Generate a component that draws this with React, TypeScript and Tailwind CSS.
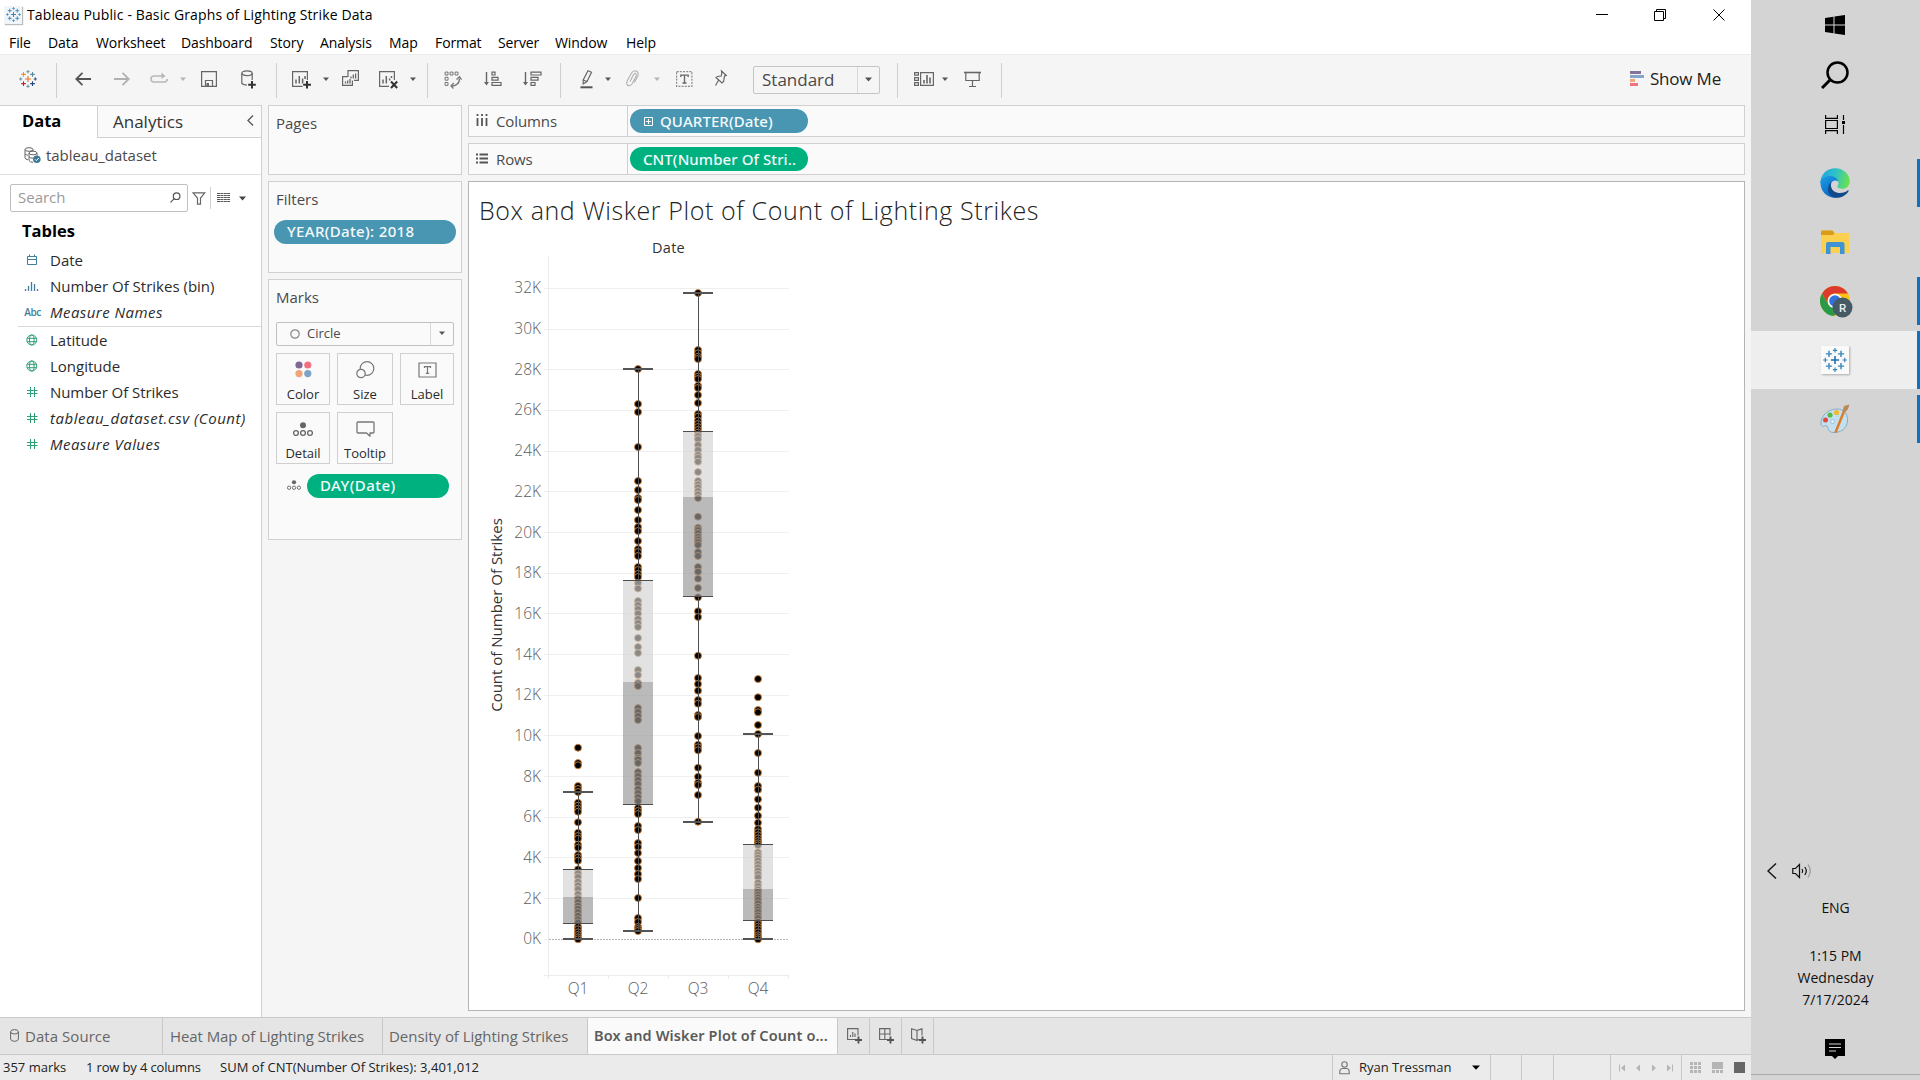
import React from 'react';

const UI = "font-['Open_Sans','Noto_Sans',sans-serif]";

/* ---------- shared bits ---------- */

function Caret({ className = '', light = false }: { className?: string; light?: boolean }) {
  return (
    <svg width="6" height="5" viewBox="0 0 6 5" className={'shrink-0 ' + className}>
      <path d="M0 0.5H6L3 4Z" fill={light ? '#b5b5b5' : '#555'} />
    </svg>
  );
}

function Sep({ className }: { className: string }) {
  return <div className={'mt-[2px] h-[35px] w-px shrink-0 bg-[#cfcfcf] ' + className} />;
}

function Ic({ w, h = 20, className = '', color = '#666', children }: { w: number; h?: number; className?: string; color?: string; children: React.ReactNode }) {
  return (
    <svg width={w} height={h} viewBox={`0 0 ${w} ${h}`} fill="none" stroke={color} strokeWidth="1.2" className={'shrink-0 ' + className}>
      {children}
    </svg>
  );
}

function Plus({ x, y, r, w, c }: { x: number; y: number; r: number; w: number; c: string }) {
  return <path d={`M${x - r} ${y}H${x + r}M${x} ${y - r}V${y + r}`} stroke={c} strokeWidth={w} />;
}

function TableauMark({ size, colors }: { size: number; colors: string[] }) {
  const [a, b, c, d, e] = colors;
  return (
    <svg width={size} height={size} viewBox="0 0 20 20" fill="none" className="shrink-0">
      <Plus x={10} y={10} r={3.4} w={1.3} c={a} />
      <Plus x={5} y={4.9} r={2.6} w={1.2} c={b} />
      <Plus x={15} y={4.9} r={2.6} w={1.2} c={c} />
      <Plus x={5} y={15.1} r={2.6} w={1.2} c={d} />
      <Plus x={15} y={15.1} r={2.6} w={1.2} c={e} />
      <Plus x={10} y={1.9} r={1.8} w={1} c={c} />
      <Plus x={10} y={18.1} r={1.8} w={1} c={c} />
      <Plus x={1.9} y={10} r={1.8} w={1} c={c} />
      <Plus x={18.1} y={10} r={1.8} w={1} c={e} />
    </svg>
  );
}

const BLUES = ['#3a7fae', '#3a86b5', '#3a86b5', '#3a86b5', '#3a86b5'];

/* ---------- title and menu ---------- */

const menus: [string, string][] = [
  ['File', 'w-[39px]'],
  ['Data', 'w-[48px]'],
  ['Worksheet', 'w-[85px]'],
  ['Dashboard', 'w-[89px]'],
  ['Story', 'w-[50px]'],
  ['Analysis', 'w-[69px]'],
  ['Map', 'w-[46px]'],
  ['Format', 'w-[63px]'],
  ['Server', 'w-[57px]'],
  ['Window', 'w-[71px]'],
  ['Help', 'w-[40px]'],
];

function TitleBar() {
  return (
    <div className="flex h-[29px] items-center bg-white pl-1 pr-[26px] text-black">
      <div className="flex h-[18px] w-[18px] items-center justify-center bg-[#f1f5f9] shadow-[1px_1px_1px_#bbb]">
        <TableauMark size={15} colors={BLUES} />
      </div>
      <div className="ml-[5px] text-[14px] tracking-[0.13px]">Tableau Public - Basic Graphs of Lighting Strike Data</div>
      <div className="ml-auto flex items-center">
        <Ic w={12} h={12} color="#000" className="mr-[46px]">
          <path d="M0 5.5H12" strokeWidth="1" />
        </Ic>
        <Ic w={12} h={12} color="#000" className="mr-[47px]">
          <path d="M0.5 2.5H9.5V11.5H0.5ZM2.5 2.5V0.5H11.5V9.5H9.5" strokeWidth="1" />
        </Ic>
        <Ic w={12} h={12} color="#000">
          <path d="M0.5 0.5L11.5 11.5M11.5 0.5L0.5 11.5" strokeWidth="1" />
        </Ic>
      </div>
    </div>
  );
}

function MenuBar() {
  return (
    <div className="flex h-[25px] items-center bg-white pl-[9px] pt-[2px] text-[14px] tracking-[-0.1px] text-black">
      {menus.map(([m, w]) => (
        <div key={m} className={'shrink-0 whitespace-nowrap ' + w}>{m}</div>
      ))}
    </div>
  );
}

/* ---------- toolbar ---------- */

function Toolbar() {
  return (
    <div className="flex h-[51px] shrink-0 items-center border-t border-[#ebebeb] bg-[#f5f5f5] pb-[2px] pr-[30px]">
      <div className="ml-[19px] flex">
        <TableauMark size={18} colors={['#e8762d', '#eb9129', '#5b879b', '#c72035', '#1f457e']} />
      </div>
      <Sep className="ml-[19px]" />
      <Ic w={16} className="ml-[18px]" color="#555"><path d="M16 10H1.5M7.5 3.8L1.2 10L7.5 16.2" strokeWidth="1.8" /></Ic>
      <Ic w={16} className="ml-[23px]" color="#b0b0b0"><path d="M0 10H14.5M8.5 3.8L14.8 10L8.5 16.2" strokeWidth="1.8" /></Ic>
      <Ic w={18} className="ml-5" color="#b8b8b8">
        <path d="M13 7H4Q1 7 1 10Q1 13 4 13H14Q17.3 13 17.3 10" strokeWidth="1.5" /><path d="M11.5 3.5L15.5 7L11.5 10Z" fill="#b8b8b8" stroke="none" />
      </Ic>
      <Caret className="ml-3" light />
      <Ic w={16} className="ml-[15px]"><path d="M0.6 2.6H15.4V17.4H0.6ZM4.5 17V11.5H11.5V17" /><path d="M5.5 14H8V17.5H5.5Z" fill="#666" stroke="none" /></Ic>
      <Ic w={15} className="ml-6">
        <path d="M0.8 4.2V14.2Q2 16 6 16M11.2 4.2V11" /><ellipse cx="6" cy="4.2" rx="5.2" ry="2.4" />
        <path d="M11 12V19.5M7.2 15.7H14.8" stroke="#333" strokeWidth="2" />
      </Ic>
      <Sep className="ml-5" />
      <Ic w={19} className="ml-[15px]">
        <path d="M10.5 17.4H0.6V2.6H15.4V11" /><path d="M4 14.5V10.5M7.3 14.5V7M10.6 14.5V9.5M13 10V7" strokeWidth="1.5" />
        <path d="M15 12V19.5M11.2 15.7H19" stroke="#333" strokeWidth="2" />
      </Ic>
      <Caret className="ml-3" />
      <Ic w={17} className="ml-[13px]">
        <path d="M6 8V1.6H16.4V11.4H12M5.5 7.6H0.6V16.4H10.4V11.6" /><path d="M9 9.5V7.5M11.3 9.5V5.5M13.6 9.5V4.5M3.5 14.5V12.5M5.7 14.5V11.5M8 14.5V10" strokeWidth="1.3" />
      </Ic>
      <Ic w={19} className="ml-5">
        <path d="M10 17.4H0.6V2.6H15.4V11" /><path d="M4 14.5V10.5M7.3 14.5V7M10.6 11.5V9.5M12.5 9V7" strokeWidth="1.5" />
        <path d="M12 12.5L18.2 19M18.2 12.5L12 19" stroke="#333" strokeWidth="2" />
      </Ic>
      <Caret className="ml-3" />
      <Sep className="ml-[11px]" />
      <Ic w={18} className="ml-4" color="#777">
        <path d="M1.1 3.1H4V6H1.1ZM6.1 3.1H9V6H6.1ZM11.1 3.1H14V6H11.1ZM1.1 8.3H4V11.2H1.1ZM1.1 13.5H4V16.4H1.1Z" strokeWidth="1" />
        <path d="M15.5 9.5Q15.5 16.5 8 17" strokeWidth="1.4" /><path d="M12.5 10.5L15.5 7.8L17.6 10.7M9.8 14L7 17L9.5 19.5" strokeWidth="1.3" />
      </Ic>
      <Ic w={18} className="ml-[22px]">
        <path d="M2.5 3V15" strokeWidth="1.4" /><path d="M0 13L2.5 16.5L5 13Z" fill="#666" stroke="none" />
        <path d="M8 3.1H11V6H8ZM8 8.3H14V11.2H8ZM8 13.5H17V16.4H8Z" />
      </Ic>
      <Ic w={19} className="ml-[21px]">
        <path d="M2.5 3V15" strokeWidth="1.4" /><path d="M0 13L2.5 16.5L5 13Z" fill="#666" stroke="none" />
        <path d="M8 3.1H18V6H8ZM8 8.3H15V11.2H8ZM8 13.5H12V16.4H8Z" />
      </Ic>
      <Sep className="ml-[18px]" />
      <Ic w={13} className="ml-[19px]">
        <path d="M8 1.8L11.5 3.3L7 12.5L3.2 15L3.2 11Z" /><path d="M3.2 11L7 12.5" /><path d="M0.5 18.3H12.5" strokeWidth="2" stroke="#555" />
      </Ic>
      <Caret className="ml-3" />
      <Ic w={13} className="ml-[15px]" color="#b0b0b0">
        <path d="M4 12.5L7.6 5.6Q9 3.6 10 5Q10.8 6 9.5 8.6L6 15Q3.6 18 1.4 16Q0 14.5 1.4 11.6L5.5 4Q8 0.6 10.8 2.3Q13 4 11.8 7L8.3 13.5" strokeWidth="1.1" />
      </Ic>
      <Caret className="ml-[15px]" light />
      <Ic w={17} className="ml-4">
        <path d="M0.6 2.6H15.9V17.4H0.6Z" strokeDasharray="2 1.2" stroke="#8a8a8a" /><path d="M4.8 8V6.2H12.2V8M8.5 6.2V14M6.5 14H10.5" strokeWidth="1.3" />
      </Ic>
      <Ic w={12} className="ml-[22px]">
        <path d="M6.5 2L11.3 6.5L9.5 7L8.6 12.5L7 14L1 8.5L2.5 7.5L6.2 7L6.8 4ZM3.7 11L0.5 16.5" />
      </Ic>
      <div className="ml-[26px] mt-px flex h-[28px] w-[127px] items-center rounded-[2px] border border-[#c4c4c4] text-[17px] text-[#4a4a4a]">
        <div className="w-[103px] pl-[8px]">Standard</div>
        <div className="flex h-full flex-1 items-center justify-center border-l border-[#d8d8d8]"><svg width="7" height="5"><path d="M0 0.5H7L3.5 4.5Z" fill="#555" /></svg></div>
      </div>
      <Sep className="ml-[17px]" />
      <Ic w={20} className="ml-4">
        <path d="M0.6 3.6H4.4V6.2H0.6ZM0.6 8.6H4.4V11.4H0.6ZM0.6 13.6H4.4V16.4H0.6ZM6.6 3.6H19.4V16.4H6.6Z" />
        <path d="M10 14.5V11M13 14.5V6M16 14.5V8.5" strokeWidth="1.6" />
      </Ic>
      <Caret className="ml-2" />
      <Ic w={17} className="ml-4">
        <path d="M0 3.5H17" strokeWidth="1.6" /><path d="M1.8 4V11.5H15.2V4M8.5 11.5V17.5M5 17.5H12" />
      </Ic>
      <Sep className="ml-5" />
      <svg width="14" height="16" className="ml-auto shrink-0">
        <path d="M0 0H11V3H0Z" fill="#86739b" /><path d="M0 4H14V7H0Z" fill="#84a6c8" /><path d="M0 8H5V11H0Z" fill="#f0a878" /><path d="M0 12H8V15H0Z" fill="#ef7280" />
      </svg>
      <div className="ml-[6px] text-[17px] tracking-[-0.2px] text-[#222]">Show Me</div>
    </div>
  );
}

/* ---------- data pane ---------- */

const BLUE = '#3f7f9b';
const GREEN = '#2f9f74';

function FieldIcon({ kind }: { kind: string }) {
  if (kind === 'abc') return <span className="w-[17px] text-center text-[10px] font-semibold tracking-[-0.4px] text-[#3f7f9b]">Abc</span>;
  return (
    <svg width="17" height="16" viewBox="0 0 17 16" fill="none" stroke={kind === 'date' || kind === 'bin' ? BLUE : GREEN} className="shrink-0">
      {kind === 'date' && <path d="M3.5 4.5H12.5V12.5H3.5ZM3.5 7.5H12.5M5.5 2.5V5M10.5 2.5V5" />}
      {kind === 'bin' && <path d="M1.5 11V13M4.500 8V13M7.500 4V13M10.500 6V13M13.500 11V13" strokeWidth="1.3" />}
      {kind === 'geo' && <><circle cx="7.8" cy="8" r="5" /><ellipse cx="7.8" cy="8" rx="2.3" ry="5" /><path d="M3.3 6.3H12.3M3.3 9.7H12.3" /></>}
      {kind === 'num' && <path d="M6.5 3V13M10.5 3V13M3 6.5H13.5M3 9.5H13.5" />}
    </svg>
  );
}

const fields: [string, string, string][] = [
  ['date', 'Date', ''],
  ['bin', 'Number Of Strikes (bin)', ''],
  ['abc', 'Measure Names', 'italic tracking-[0.45px]'],
];
const measures: [string, string, string][] = [
  ['geo', 'Latitude', ''],
  ['geo', 'Longitude', ''],
  ['num', 'Number Of Strikes', 'tracking-[-0.06px]'],
  ['num', 'tableau_dataset.csv (Count)', 'italic tracking-[0.52px]'],
  ['num', 'Measure Values', 'italic tracking-[0.45px]'],
];

function Field({ f }: { f: [string, string, string] }) {
  return (
    <div className="flex h-[26px] items-center pl-[24px] text-[15px] text-[#2b2b2b]">
      <FieldIcon kind={f[0]} />
      <span className={'ml-[9px] whitespace-nowrap ' + f[2]}>{f[1]}</span>
    </div>
  );
}

function DataPane() {
  return (
    <div className="flex w-[262px] shrink-0 flex-col border-r border-t border-[#d0d0d0] bg-white">
      <div className="flex h-[32px] shrink-0">
        <div className="w-[97px] pl-[22px] pt-[3px] text-[16.5px] leading-[24px] font-bold text-black">Data</div>
        <div className="flex flex-1 items-center justify-between border-b border-l border-[#d0d0d0] bg-[#fafafa] pl-[15px] pr-[7px] text-[17px] text-[#333]">
          <span>Analytics</span>
          <svg width="7" height="11" fill="none" className="mb-[2px]"><path d="M6 0.5L1 5.5L6 10.5" stroke="#555" strokeWidth="1.3" /></svg>
        </div>
      </div>
      <div className="flex h-[37px] shrink-0 items-center border-b border-[#e0e0e0] pb-[2px] pl-[24px] text-[15px] text-[#4a4a4a]">
        <svg width="17" height="17" viewBox="0 0 17 17" fill="none" stroke="#666">
          <ellipse cx="5" cy="2.5" rx="4" ry="1.8" /><path d="M1 2.5V11Q1.5 12.5 4 12.8M9 2.5V4M1 7Q2 8 4 8.2" />
          <ellipse cx="9" cy="6" rx="4" ry="1.8" /><path d="M5 6V13.5Q6 15.3 9 15.3M13 6V8.5M5 9.8Q6 11.3 9.3 11.2" />
          <circle cx="12.8" cy="12.3" r="3.8" fill="#3a7a96" stroke="none" /><path d="M11 12.3L12.4 13.7L14.800 11" stroke="#fff" />
        </svg>
        <span className="ml-[5px] tracking-[-0.04px]">tableau_dataset</span>
      </div>
      <div className="mt-[9px] flex h-[28px] shrink-0 items-center pl-[10px]">
        <div className="flex h-[28px] w-[178px] items-center justify-between rounded-[2px] border border-[#c0c0c0] pb-[2px] pl-[7px] pr-[6px] text-[15px] text-[#9a9a9a]">
          <span>Search</span>
          <svg width="11" height="11" viewBox="0 0 11 11" fill="none" stroke="#555" strokeWidth="1.2"><circle cx="6.6" cy="4.2" r="3.3" /><path d="M4.2 6.6L0.5 10.3" /></svg>
        </div>
        <svg width="14" height="13" fill="none" className="ml-[4px]"><path d="M1 0.8H12.8L8.5 6V12.2H5.5V6Z" stroke="#666" strokeWidth="1.2" /></svg>
        <div className="ml-[4px] h-[22px] w-px bg-[#d0d0d0]" />
        <svg width="13" height="12" className="ml-[6px]">
          <path d="M0 1.5H13M0 3.5H13M0 5.5H13M0 7.5H13M0 9.5H13" stroke="#555" strokeWidth="1" strokeDasharray="3 0.4" />
        </svg>
        <svg width="8" height="5" className="ml-[9px]"><path d="M0 0.5H7L3.5 4.5Z" fill="#444" /></svg>
      </div>
      <div className="mt-[6px] h-[27px] shrink-0 pl-[22px] text-[16.5px] leading-[26px] font-bold text-black">Tables</div>
      <div className="mt-[2px]">
        {fields.map((f) => <Field key={f[1]} f={f} />)}
        <div className="ml-[18px] h-[2px] border-b border-[#d8dcd8]" />
        {measures.map((f) => <Field key={f[1]} f={f} />)}
      </div>
    </div>
  );
}

/* ---------- cards ---------- */

const CARD = 'border border-[#d0d0d0] bg-[#fafafa]';
const PILL = "flex h-[24px] items-center whitespace-nowrap rounded-full font-['Noto_Sans','Open_Sans',sans-serif] text-[15px] font-medium text-[#f4fafc]";

function MarkButton({ label, className, children }: { label: string; className: string; children: React.ReactNode }) {
  return (
    <div className={'flex h-[52px] flex-col items-center justify-between border border-[#cfcfcf] bg-[#fafafa] pt-[7px] text-[13px] leading-[20px] text-[#2b2b2b] ' + className}>
      {children}
      <span>{label}</span>
    </div>
  );
}

function DetailIcon({ w }: { w: number }) {
  return (
    <svg width={w} height={(w * 15) / 20} viewBox="0 0 20 15" fill="none" stroke="#666" strokeWidth="1.3">
      <circle cx="10" cy="3.2" r="3" fill="#666" stroke="none" />
      <circle cx="3" cy="11" r="2.4" /><circle cx="10" cy="11" r="2.4" /><circle cx="17" cy="11" r="2.4" />
    </svg>
  );
}

function Cards() {
  return (
    <div className="ml-[6px] flex w-[194px] shrink-0 flex-col text-[15px] text-[#4a4a4a]">
      <div className={'h-[70px] shrink-0 pl-[7px] pt-[6px] ' + CARD}>Pages</div>
      <div className={'mt-[6px] h-[92px] shrink-0 pl-[7px] pt-[6px] ' + CARD}>
        Filters
        <div className={'-ml-[2px] mt-[9px] w-[182px] bg-[#4996b2] pl-[13px] tracking-[0.34px] ' + PILL}>YEAR(Date): 2018</div>
      </div>
      <div className={'mt-[6px] h-[261px] shrink-0 pl-[7px] pt-[6px] ' + CARD}>
        Marks
        <div className="mt-[13px] flex h-[24px] w-[178px] items-center rounded-[2px] border border-[#c0c0c0] text-[13px]">
          <div className="flex flex-1 items-center pl-[13px]">
            <svg width="10" height="10" fill="none"><circle cx="5" cy="5" r="4.2" stroke="#888" strokeWidth="1.2" /></svg>
            <span className="ml-[7px]">Circle</span>
          </div>
          <div className="flex h-full w-[23px] items-center justify-center border-l border-[#d8d8d8]"><Caret /></div>
        </div>
        <div className="mt-[7px] flex">
          <MarkButton label="Color" className="w-[54px]">
            <svg width="17" height="17"><circle cx="4" cy="4" r="3.6" fill="#7d6794" /><circle cx="12.8" cy="4" r="3.6" fill="#f2707f" /><circle cx="4" cy="12.6" r="3.6" fill="#efa577" /><circle cx="12.8" cy="12.6" r="3.6" fill="#7fa3c7" /></svg>
          </MarkButton>
          <MarkButton label="Size" className="ml-[7px] w-[56px]">
            <svg width="19" height="18" fill="none" stroke="#777" strokeWidth="1.2"><circle cx="11" cy="7.5" r="6.8" /><circle cx="5" cy="12.5" r="4.2" fill="#fafafa" /></svg>
          </MarkButton>
          <MarkButton label="Label" className="ml-[7px] w-[54px]">
            <svg width="19" height="17" fill="none" stroke="#777" strokeWidth="1.2"><path d="M1 2H18V16H1Z" /><path d="M6.5 7V5.6H12.5V7M9.5 5.6V12.4M7.8 12.4H11.2" /></svg>
          </MarkButton>
        </div>
        <div className="mt-[7px] flex">
          <MarkButton label="Detail" className="w-[54px]"><div className="pt-[2px]"><DetailIcon w={20} /></div></MarkButton>
          <MarkButton label="Tooltip" className="ml-[7px] w-[56px]">
            <svg width="19" height="17" fill="none" stroke="#777" strokeWidth="1.3" strokeLinejoin="round"><path d="M2 2H17Q18 2 18 3V12Q18 13 17 13H14V16.2L10.5 13H2Q1 13 1 12V3Q1 2 2 2Z" /></svg>
          </MarkButton>
        </div>
        <div className="mt-[10px] flex items-center pl-[11px]">
          <DetailIcon w={14} />
          <div className={'ml-[6px] w-[142px] bg-[#00b180] pl-[13px] tracking-[0.45px] ' + PILL}>DAY(Date)</div>
        </div>
      </div>
    </div>
  );
}

/* ---------- chart ---------- */

const y = (k: number) => 939.3 - 20.34 * k;

const columns = [
  {
    x: 578, q3: 869.5, med: 897, q1: 923.5, top: 792, bottom: 939,
    dots: [747.7, 763, 765.3, 786, 789, 792, 802.7, 805.7, 808.7, 811.7, 822.3, 832.7, 836, 838.7, 844.7, 847.7, 855, 857.7, 860.7, 869.3, 873.3, 877, 881.7, 885.3, 889, 894, 898, 902, 905.7, 908.7, 912, 915.7, 919.3, 922.3, 926.7, 929.3, 932.3, 935, 937.3, 939.3],
  },
  {
    x: 638, q3: 580.5, med: 682, q1: 804.5, top: 369, bottom: 931,
    dots: [369, 404, 412, 447, 481, 490, 498, 500, 510, 520, 527, 531, 541, 549, 552, 556, 567, 570, 574, 577, 583, 588.5, 601, 605, 609, 613.5, 619, 623, 627, 638, 647, 653, 670, 675, 682.7, 686, 708, 712, 716, 720, 748, 753, 758, 759.5, 763, 772, 776, 780, 784, 789, 793, 797, 801, 808, 811, 814, 826, 830, 843, 847, 853, 861, 868, 874, 879, 898, 918, 922, 927, 929, 931],
  },
  {
    x: 698, q3: 431.5, med: 497, q1: 596.5, top: 293, bottom: 822,
    dots: [293, 350, 353.3, 356.7, 359, 374, 376.7, 379, 385.7, 388, 395, 403, 414, 416.7, 420.7, 424, 427, 430, 432.7, 436, 439.3, 445, 450, 455, 457.7, 461.7, 472, 481, 484.3, 487.3, 491, 494.3, 498, 516.7, 527.7, 530, 533, 536.7, 539.3, 542, 545, 552, 556, 567, 571.7, 578.7, 588, 597.3, 611.3, 617, 655.7, 678, 684, 690.7, 700, 703.7, 715, 717, 736, 744.7, 747.3, 750.3, 767.7, 776.7, 782.7, 785, 795, 821.7],
  },
  {
    x: 758, q3: 844.5, med: 889, q1: 920.5, top: 734, bottom: 939,
    dots: [679, 697.3, 710, 712.3, 725, 734, 753, 772.7, 786, 789.7, 799.3, 807.7, 815.7, 822.7, 829, 832.3, 835.3, 838.3, 841, 843.3, 845.3, 852.3, 855, 857.7, 860.7, 864, 867.3, 870.7, 874, 877.3, 882.7, 886, 889.3, 892, 894.7, 897.3, 900, 903.3, 906.7, 909.3, 912, 915.3, 918, 921.7, 924, 926.7, 929.3, 932.3, 935.3, 937.3, 939.3],
  },
];

function Chart() {
  const ticks = Array.from({ length: 17 }, (_, i) => i * 2);
  return (
    <svg width="340" height="774" viewBox="469 236 340 774" className={'block ' + UI}>
      <text x="668.5" y="252.7" fontSize="14.5" textAnchor="middle" fill="#333" letterSpacing="0.3">Date</text>
      <text transform="translate(502 615) rotate(-90)" fontSize="15" textAnchor="middle" fill="#333">Count of Number Of Strikes</text>
      {ticks.map((k) => (
        <g key={k}>
          {k > 0 && <path d={`M544 ${Math.floor(y(k)) + 0.5}H789`} stroke="#efefef" />}
          <text x="541" y={Math.round(y(k) + 5)} fontSize="15.5" textAnchor="end" fill="#5c5c5c" fontWeight="300">{k}K</text>
        </g>
      ))}
      <path d="M544 939.5H549" stroke="#efefef" />
      <path d="M549 939.5H788" stroke="#b5b5b5" strokeDasharray="2 1" />
      <path d="M548.5 256V979M544 975.5H789M608.5 975V979M668.5 975V979M728.5 975V979M788.5 975V979" stroke="#ececec" fill="none" />
      {columns.map((c, i) => (
        <g key={c.x}>
          {c.dots.map((d, j) => (
            <circle key={j} cx={c.x} cy={d} r="3.5" fill="#000" stroke="#d08338" strokeWidth="0.9" />
          ))}
          <path d={`M${c.x - 15} ${c.q3}H${c.x + 15}V${c.med}H${c.x - 15}Z`} fill="#d2d2d2" fillOpacity="0.65" />
          <path d={`M${c.x - 15} ${c.med}H${c.x + 15}V${c.q1}H${c.x - 15}Z`} fill="#9a9898" fillOpacity="0.67" />
          <path d={`M${c.x + 0.5} ${c.top}V${c.q3}M${c.x + 0.5} ${c.q1}V${c.bottom}M${c.x - 15} ${c.q3}H${c.x + 15}M${c.x - 15} ${c.q1}H${c.x + 15}`} stroke="#4d4d4d" strokeWidth="1" />
          <path d={`M${c.x - 15} ${c.top}H${c.x + 15}M${c.x - 15} ${c.bottom}H${c.x + 15}`} stroke="#555" strokeWidth="2" />
          <text x={c.x} y="994" fontSize="15.5" textAnchor="middle" fill="#5c5c5c" fontWeight="300">{'Q' + (i + 1)}</text>
        </g>
      ))}
    </svg>
  );
}

/* ---------- shelves and view ---------- */

function Shelf({ icon, label, children }: { icon: React.ReactNode; label: string; children: React.ReactNode }) {
  return (
    <div className={'mb-[6px] flex h-[32px] shrink-0 ' + CARD}>
      <div className="flex w-[158px] items-center pl-[7px] text-[15px] text-[#4a4a4a]">
        {icon}
        <span className="ml-[8px] tracking-[-0.1px]">{label}</span>
      </div>
      <div className="flex flex-1 items-center border-l border-[#d0d0d0] pl-[2px]">{children}</div>
    </div>
  );
}

function Worksheet() {
  return (
    <div className="ml-[6px] mr-[6px] flex flex-1 flex-col">
      <Shelf
        label="Columns"
        icon={<svg width="12" height="13" className="mb-[2px]"><path d="M1.5 4V12M6 4V12M10.500 4V12M1.5 0V2M6 0V2M10.500 0V2" stroke="#555" strokeWidth="1.800" /></svg>}
      >
        <div className={'w-[178px] bg-[#4996b2] pl-[14px] tracking-[0.1px] ' + PILL}>
          <svg width="9" height="9" fill="none" className="mr-[7px]"><path d="M0.5 0.5H8.5V8.5H0.5ZM2 4.5H7M4.5 2V7" stroke="#fff" /></svg>
          QUARTER(Date)
        </div>
      </Shelf>
      <Shelf
        label="Rows"
        icon={<svg width="12" height="11" className="mb-[2px]"><path d="M0 1.5H2M3.5 1.5H12M0 5.5H2M3.5 5.5H12M0 9.5H2M3.5 9.5H12" stroke="#555" strokeWidth="1.8" /></svg>}
      >
        <div className={'w-[178px] bg-[#00b180] pl-[13px] tracking-[0.09px] ' + PILL}>CNT(Number Of Stri..</div>
      </Shelf>
      <div className="mb-[6px] flex-1 border border-[#b4b4b4] bg-white">
        <div className="h-[54px] whitespace-nowrap pl-[10px] pt-[10px] text-[25px] leading-[36px] font-light tracking-[0.6px] text-[#222]">
          Box and Wisker Plot of Count of Lighting Strikes
        </div>
        <Chart />
      </div>
    </div>
  );
}

/* ---------- sheet tabs and status bar ---------- */

function NewTab({ children }: { children: React.ReactNode }) {
  return (
    <div className="flex w-[32px] items-center justify-center border-r border-[#c8c8c8]">
      <svg width="16" height="16" fill="none" stroke="#666" strokeWidth="1.1" className="ml-[2px]">
        {children}
        <path d="M11.5 8.5V15.5M8 12H15" stroke="#555" strokeWidth="1.9" />
      </svg>
    </div>
  );
}

function SheetTabs() {
  return (
    <div className="flex h-[38px] shrink-0 whitespace-nowrap border-y border-[#cacaca] bg-[#e5e5e5] text-[15px] text-[#666]">
      <div className="flex w-[163px] items-center border-r border-[#c8c8c8] pl-[10px]">
        <svg width="9" height="13" fill="none" className="mb-[2px]" stroke="#666"><ellipse cx="4.5" cy="2.8" rx="3.900" ry="2.2" /><path d="M0.6 2.8V10Q1 12.3 4.5 12.3Q8 12.3 8.4 10V2.8" /></svg>
        <span className="ml-[6px] tracking-[0.05px]">Data Source</span>
      </div>
      <div className="flex w-[220px] items-center border-r border-[#c8c8c8] pl-[7px] tracking-[-0.08px]">Heat Map of Lighting Strikes</div>
      <div className="flex w-[205px] items-center border-r border-[#c8c8c8] pl-[6px] tracking-[-0.04px]">Density of Lighting Strikes</div>
      <div className="flex w-[250px] items-center border-r border-[#c8c8c8] bg-[#fafafa] pb-px pl-[6px] font-['Noto_Sans','Open_Sans',sans-serif] text-[14.5px] font-semibold tracking-[0.12px] text-[#5a5a5a]">
        Box and Wisker Plot of Count o...
      </div>
      <NewTab><path d="M8 11.5H0.6V0.6H11V7.5M3.5 9V7M5.8 9V4M8 9V5.5" /></NewTab>
      <NewTab><path d="M8 11.5H0.6V0.6H11V7.5M5.8 0.6V11.5M0.6 6H11" /></NewTab>
      <NewTab><path d="M6 2.5L0.6 0.8V10.5L6 12.5V2.5L11 0.8V7.5M6 12.5L8 11.5" /></NewTab>
    </div>
  );
}

function StatusBar() {
  return (
    <div className="flex h-[25px] shrink-0 items-center whitespace-nowrap bg-[#ebebeb] text-[13px] text-[#222]">
      <span className="ml-[3px] w-[83px]">357 marks</span>
      <span className="w-[134px] tracking-[-0.15px]">1 row by 4 columns</span>
      <span className="tracking-[0.03px]">SUM of CNT(Number Of Strikes): 3,401,012</span>
      <div className="ml-auto flex h-full items-center">
        <div className="flex h-full w-[158px] items-center border-l border-[#c8c8c8] pl-[6px]">
          <svg width="11" height="14" fill="none" stroke="#777" strokeWidth="1.1"><circle cx="5.5" cy="3.5" r="2.7" /><path d="M0.8 12.8V10.5Q1 7.5 3.5 7.5H7.5Q10 7.5 10.2 10.5V12.8Z" /></svg>
          <span className="ml-[9px]">Ryan Tressman</span>
          <svg width="8" height="5" className="ml-auto mr-[10px]"><path d="M0 0.5H8L4 4.8Z" fill="#000" /></svg>
        </div>
        <div className="h-full w-[31px] border-l border-[#c8c8c8]" />
        <div className="h-full w-[32px] border-l border-[#c8c8c8]" />
        <div className="h-full w-[57px] border-l border-[#c8c8c8]" />
        <div className="flex h-full w-[71px] items-center border-l border-[#c8c8c8] pl-[8px]">
          <svg width="55" height="8" fill="#b5b5b5"><path d="M0 0.5H1V7.5H0ZM6 0.5V7.5L2 4ZM21 0.5V7.5L17 4ZM33 0.5V7.5L37 4ZM48 0.5V7.5L52 4ZM53 0.5H54V7.5H53Z" /></svg>
        </div>
        <div className="flex h-full w-[70px] items-center gap-[11px] border-l border-[#c8c8c8] pl-[8px]">
          <svg width="11" height="11" fill="#b5b5b5"><path d="M0 0H3V3H0ZM4 0H7V3H4ZM8 0H11V3H8ZM0 4H3V7H0ZM4 4H7V7H4ZM8 4H11V7H8ZM0 8H3V11H0ZM4 8H7V11H4ZM8 8H11V11H8Z" /></svg>
          <svg width="11" height="11" fill="#b5b5b5"><path d="M0 0H11V7H0ZM0 8H3V11H0ZM4 8H7V11H4ZM8 8H11V11H8Z" /></svg>
          <div className="h-[11px] w-[11px] bg-[#666]" />
        </div>
      </div>
    </div>
  );
}

/* ---------- taskbar ---------- */

function TaskButton({ running = 'none', children }: { running?: 'none' | 'open' | 'active'; children: React.ReactNode }) {
  return (
    <div className={'relative mb-px flex h-[58px] shrink-0 items-center justify-center pr-[2px] ' + (running === 'active' ? 'bg-[#eeeeee]' : '')}>
      {children}
      {running === 'open' && <div className="absolute right-0 top-[5px] h-[48px] w-[3px] bg-[#0b72c4]" />}
      {running === 'active' && <div className="absolute right-0 top-0 h-[58px] w-[3px] bg-[#0b72c4]" />}
    </div>
  );
}

function Taskbar() {
  return (
    <div className="flex w-[169px] shrink-0 flex-col bg-[#d4d4d4] text-center text-[14px] text-[#111]">
      <div className="flex h-[50px] shrink-0 items-center justify-center pr-[2px]">
        <svg width="20" height="20"><path d="M0 3L8.5 1.7V9.5H0ZM9.5 1.5L20 0V9.5H9.5ZM0 10.5H8.5V18.3L0 17ZM9.5 10.5H20V20L9.5 18.5Z" fill="#000" /></svg>
      </div>
      <div className="flex h-[50px] shrink-0 items-center justify-center pr-[2px]">
        <svg width="28" height="28" fill="none" stroke="#000"><circle cx="16.5" cy="11.5" r="10" strokeWidth="2.5" /><path d="M9.5 18.5L1 27" strokeWidth="3" /></svg>
      </div>
      <div className="flex h-[54px] shrink-0 justify-center pr-[2px] pt-[15px]">
        <svg width="20" height="19" fill="none" stroke="#000" strokeWidth="1.2"><path d="M0.6 5.5H12.4V13.5H0.6ZM0.6 0V3.4H12.4V0M0.6 19V15.6H12.4V19M18.500 0V5M18.500 10V19" /><path d="M17 6H20V9H17Z" fill="#000" stroke="none" /></svg>
      </div>
      <TaskButton running="open">
        <svg width="30" height="30" viewBox="0 0 256 256">
          <defs>
            <linearGradient id="eg" x1="0" y1="0.3" x2="1" y2="0.5"><stop offset="0" stopColor="#1fa5e0" /><stop offset="0.5" stopColor="#2fc3c6" /><stop offset="1" stopColor="#6be24c" /></linearGradient>
            <linearGradient id="eb" x1="0" y1="0" x2="0.6" y2="1"><stop offset="0" stopColor="#1aa0e8" /><stop offset="1" stopColor="#0a63bd" /></linearGradient>
          </defs>
          <path d="M4 115C12 45 65 2 128 2C205 2 254 58 254 112C254 152 224 178 188 178C160 178 146 166 148 156C150 148 158 142 158 128C158 100 132 84 100 84C52 84 18 100 4 132Z" fill="url(#eg)" />
          <path d="M4 115C14 90 50 66 92 68C130 70 158 98 158 128C158 110 140 104 128 106C100 110 88 134 92 160C98 200 130 226 168 226C160 240 148 254 128 254C56 254 -2 192 4 115Z" fill="url(#eb)" />
          <path d="M100 116C86 136 88 200 150 212C190 218 220 204 236 192C244 187 246 194 242 200C220 234 180 254 140 254C90 252 66 214 68 178C70 150 84 126 100 116Z" fill="#114a8b" />
        </svg>
      </TaskButton>
      <TaskButton>
        <svg width="28" height="24">
          <path d="M0 2Q0 0.5 1.5 0.5H11L13.5 3H28V23H0Z" fill="#fcd04f" /><path d="M0 5V1.5Q0 0.5 1.5 0.5H11.5L13.5 3L12 5Z" fill="#d99c14" />
          <path d="M5 24V14Q5 12 7 12H21Q23.5 12 23.5 14V24H19V17H9.5V24Z" fill="#3f93d2" />
        </svg>
      </TaskButton>
      <TaskButton running="open">
        <svg width="34" height="34" className="ml-[4px] mt-px">
          <circle cx="15" cy="16" r="15" fill="#fbc116" />
          <path d="M2 8.5A15 15 0 0 1 28 8.5H15A7.5 7.5 0 0 0 8.5 19.7Z" fill="#dc3a2c" />
          <path d="M2 8.5A15 15 0 0 0 14 31L20 21L8.5 19.7Z" fill="#2a9a48" />
          <circle cx="15" cy="16" r="7.3" fill="#fff" /><circle cx="15" cy="16" r="5.8" fill="#3272dd" />
          <circle cx="22.5" cy="22.5" r="10" fill="#455a64" />
          <text x="22.5" y="26.5" fontSize="11.5" fontWeight="500" textAnchor="middle" fill="#e8eef0" fontFamily="Roboto, sans-serif">R</text>
        </svg>
      </TaskButton>
      <TaskButton running="active">
        <div className="flex h-[28px] w-[28px] items-center justify-center bg-[#fafafa] shadow-[1px_1px_2px_#aaa]">
          <TableauMark size={24} colors={['#1f6fae', '#3a86bd', '#3a86bd', '#3a86bd', '#3a86bd']} />
        </div>
      </TaskButton>
      <TaskButton running="open">
        <svg width="30" height="30">
          <path d="M1 21C0 12 8 5 17 5C24 5 28 10 27.5 17C27 25 20 29 13 28.5C8 28 8 24 7 22C5.5 20.5 3 24 1 21Z" fill="#c4e0ee" stroke="#86afc6" />
          <circle cx="5.5" cy="16" r="2.5" fill="#dd4a3c" /><circle cx="10" cy="11" r="2.6" fill="#57b947" /><circle cx="16.5" cy="8.5" r="2.6" fill="#efbb33" /><circle cx="12.5" cy="17.5" r="2" fill="#eaf4fa" stroke="#8db3cc" strokeWidth="0.8" />
          <path d="M24.5 6L15.5 28.5" stroke="#dd7c2c" strokeWidth="2.5" /><path d="M22.5 7L24 2L29.5 0.5L28 5L25.5 8Z" fill="#b98a5e" />
        </svg>
      </TaskButton>
      <div className="mt-auto flex h-[16px] shrink-0 items-center pl-[16px]">
        <svg width="10" height="16" fill="none"><path d="M9 0.5L1 8L9 15.5" stroke="#111" strokeWidth="1.4" /></svg>
        <svg width="21" height="16" fill="none" stroke="#111" strokeWidth="1.2" className="ml-[15px]">
          <path d="M0.8 5.5H3.5L7.5 1.5V14.5L3.5 10.5H0.8Z" /><path d="M10 6Q11.5 8 10 10M12.8 4Q15.8 8 12.8 12" /><path d="M16 1.5Q20.5 8 16 14.5" stroke="#999" />
        </svg>
      </div>
      <div className="mt-[19px] h-[20px] shrink-0 leading-[20px] tracking-[-0.1px]">ENG</div>
      <div className="mt-[27px] shrink-0 leading-[22px]">
        <div>1:15 PM</div>
        <div>Wednesday</div>
        <div>7/17/2024</div>
      </div>
      <div className="mt-[28px] flex h-[20px] shrink-0 justify-center pr-[2px]">
        <svg width="20" height="20"><path d="M0 0H20V17H13L10 20L7 17H0Z" fill="#000" /><path d="M4 5H16M4 8.5H16M4 12H11" stroke="#d4d4d4" strokeWidth="1.2" /></svg>
      </div>
      <div className="mt-[15px] h-[6px] shrink-0 border-t border-[#aaaaaa]" />
    </div>
  );
}

export default function App() {
  return (
    <div className={'flex h-[1080px] w-[1920px] overflow-hidden ' + UI}>
      <div className="flex w-[1751px] shrink-0 flex-col bg-[#f5f5f5]">
        <TitleBar />
        <MenuBar />
        <Toolbar />
        <div className="flex flex-1">
          <DataPane />
          <Cards />
          <Worksheet />
        </div>
        <SheetTabs />
        <StatusBar />
      </div>
      <Taskbar />
    </div>
  );
}
